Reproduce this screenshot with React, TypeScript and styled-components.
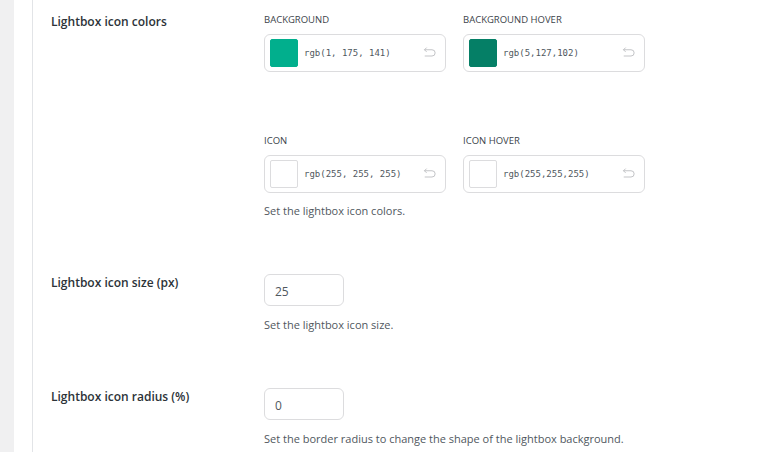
import styled, { createGlobalStyle } from "styled-components";

const GlobalStyle = createGlobalStyle`
  html, body {
    margin: 0;
    padding: 0;
    background: #f0f0f1;
  }
  body {
    font-family: "Open Sans", "Noto Sans", sans-serif;
    color: #1d2327;
  }
`;

const Page = styled.div`
  display: flex;
  height: 452px;
  overflow: hidden;
  padding-left: 14px;
`;

const Gutter = styled.div`
  width: 18px;
  background: #fff;
  border-right: 1px solid #e2e4e7;
`;

const Panel = styled.div`
  flex: 1;
  background: #fff;
  padding: 13px 0 0 18px;
  display: flex;
  flex-direction: column;
  gap: 56px;
`;

const Row = styled.div`
  display: flex;
`;

const RowLabel = styled.div<{ $top?: number }>`
  width: 213px;
  flex-shrink: 0;
  padding-top: ${(p) => p.$top ?? 0}px;
  font-size: 12px;
  font-weight: 600;
  color: #2c3338;
  line-height: 16px;
`;

const Field = styled.div`
  display: flex;
  flex-direction: column;
`;

const PickerGroup = styled.div<{ $gap?: number }>`
  display: flex;
  gap: 17px;
  margin-top: ${(p) => p.$gap ?? 0}px;
`;

const Picker = styled.div`
  display: flex;
  flex-direction: column;
  width: 182px;
`;

const PickerTitle = styled.div`
  font-size: 9.5px;
  text-transform: uppercase;
  color: #3c434a;
  line-height: 13px;
  margin-bottom: 8px;
`;

const ColorBox = styled.div`
  height: 38px;
  box-sizing: border-box;
  border: 1px solid #dcdcde;
  border-radius: 6px;
  display: flex;
  align-items: center;
  padding: 0 8px 0 5px;
`;

const Swatch = styled.div<{ $color: string }>`
  width: 28px;
  height: 28px;
  box-sizing: border-box;
  background: ${(p) => p.$color};
  border: 1px solid ${(p) => (p.$color === "#fff" ? "#dcdcde" : p.$color)};
  border-radius: 2px;
`;

const ColorValue = styled.span`
  flex: 1;
  margin-left: 6px;
  font-family: "DejaVu Sans Mono", "Liberation Mono", monospace;
  font-size: 9px;
  color: #50575e;
`;

const ResetIcon = styled.svg`
  width: 15px;
  height: 15px;
  color: #c3c4c7;
`;

const Description = styled.p<{ $space: number }>`
  margin: ${(p) => p.$space}px 0 0;
  font-size: 11px;
  color: #50575e;
  line-height: 14px;
`;

const NumberInput = styled.div`
  width: 80px;
  height: 32px;
  box-sizing: border-box;
  border: 1px solid #dcdcde;
  border-radius: 6px;
  display: flex;
  align-items: center;
  padding: 2px 10px 0;
  font-size: 12px;
  color: #50575e;
`;

function Reset() {
  return (
    <ResetIcon viewBox="0 0 24 24" fill="none" stroke="currentColor" strokeWidth={1.6} strokeLinecap="round" strokeLinejoin="round">
      <path d="M7 3 4 6l3 3" />
      <path d="M4 6h12a5 5 0 0 1 0 10H5" />
    </ResetIcon>
  );
}

type PickerProps = { title: string; color: string; value: string };

function ColorPicker({ title, color, value }: PickerProps) {
  return (
    <Picker>
      <PickerTitle>{title}</PickerTitle>
      <ColorBox>
        <Swatch $color={color} />
        <ColorValue>{value}</ColorValue>
        <Reset />
      </ColorBox>
    </Picker>
  );
}

export default function App() {
  return (
    <>
      <GlobalStyle />
      <Page>
        <Gutter />
        <Panel>
          <Row>
            <RowLabel $top={1}>Lightbox icon colors</RowLabel>
            <Field>
              <PickerGroup>
                <ColorPicker title="Background" color="rgb(1, 175, 141)" value="rgb(1, 175, 141)" />
                <ColorPicker title="Background hover" color="rgb(5,127,102)" value="rgb(5,127,102)" />
              </PickerGroup>
              <PickerGroup $gap={62}>
                <ColorPicker title="Icon" color="#fff" value="rgb(255, 255, 255)" />
                <ColorPicker title="Icon hover" color="#fff" value="rgb(255,255,255)" />
              </PickerGroup>
              <Description $space={11}>Set the lightbox icon colors.</Description>
            </Field>
          </Row>
          <Row>
            <RowLabel $top={1}>Lightbox icon size (px)</RowLabel>
            <Field>
              <NumberInput>25</NumberInput>
              <Description $space={12}>Set the lightbox icon size.</Description>
            </Field>
          </Row>
          <Row>
            <RowLabel $top={1}>Lightbox icon radius (%)</RowLabel>
            <Field>
              <NumberInput>0</NumberInput>
              <Description $space={12}>Set the border radius to change the shape of the lightbox background.</Description>
            </Field>
          </Row>
        </Panel>
      </Page>
    </>
  );
}
